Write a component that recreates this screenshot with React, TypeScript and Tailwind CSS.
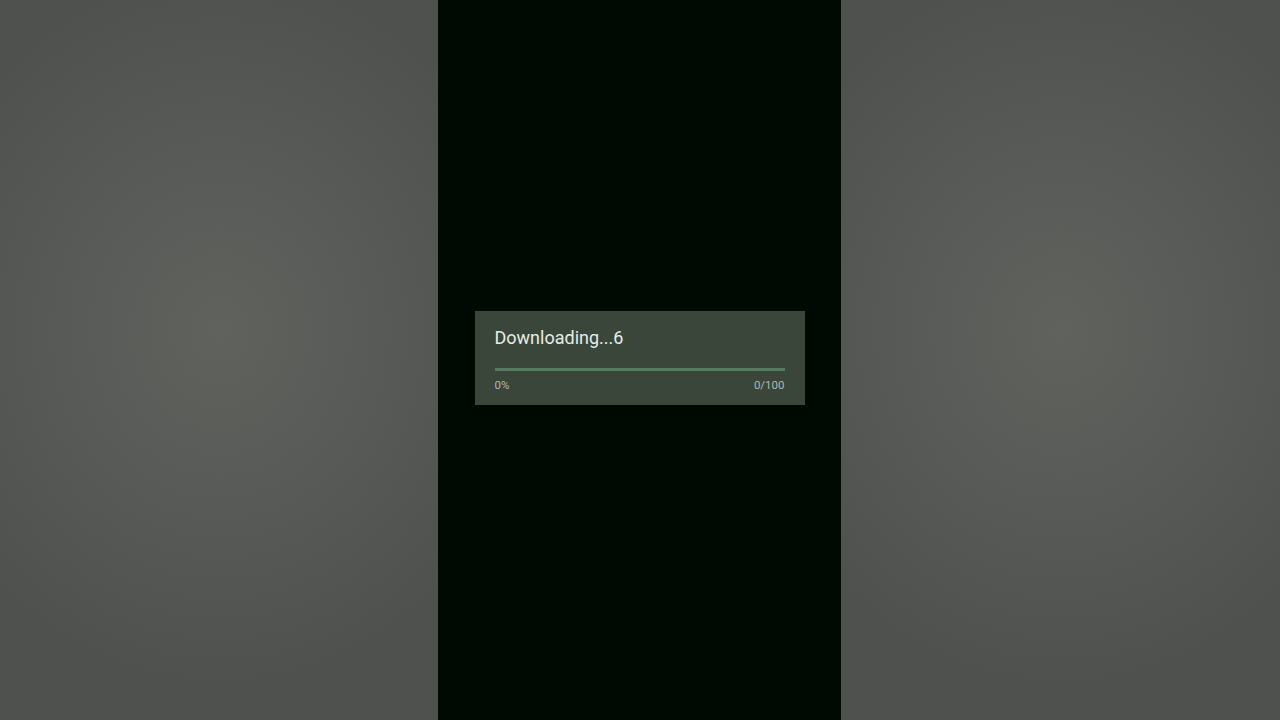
export default function App() {
  return (
    <div className="flex h-[720px] w-[1280px] overflow-hidden" style={{ fontFamily: "Roboto, 'Noto Sans', sans-serif" }}>
      <div className="h-full w-[438px] bg-[radial-gradient(ellipse_320px_360px_at_220px_330px,#60625e_0%,#585a57_50%,#4f514f_100%)]" />
      <div className="flex h-full w-[403px] flex-col items-center bg-[#000a02] pt-[311px]">
        <div className="flex h-[94px] w-[330px] flex-col bg-[#3b463b] px-[20px] pt-[17px] shadow-[0_2px_6px_rgba(0,0,0,0.5)]">
          <div className="text-[18px] leading-[20px] text-[#e6ece4]">Downloading...6</div>
          <div className="mt-[20px] h-[3px] w-full bg-[#587a62]" />
          <div className="mt-[7px] flex justify-between text-[11.5px] leading-[14px] text-[#b0b8ae]">
            <span>0%</span>
            <span>0/100</span>
          </div>
        </div>
      </div>
      <div className="h-full flex-1 bg-[radial-gradient(ellipse_320px_360px_at_220px_330px,#60625e_0%,#585a57_50%,#4f514f_100%)]" />
    </div>
  );
}
